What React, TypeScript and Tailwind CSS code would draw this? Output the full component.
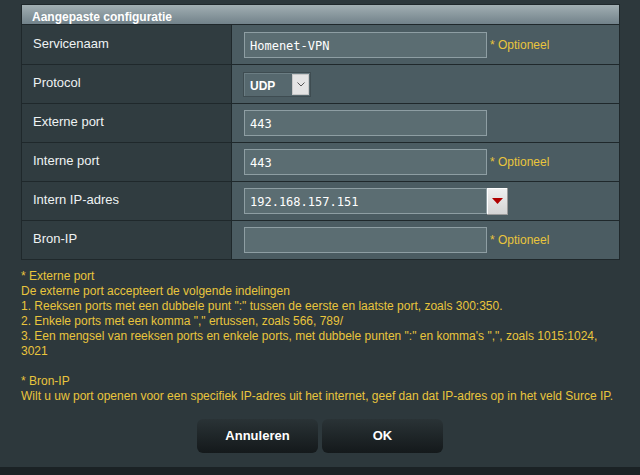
const rows = [
  { label: "Servicenaam", kind: "input", value: "Homenet-VPN", optional: true },
  { label: "Protocol", kind: "select", value: "UDP", optional: false },
  { label: "Externe port", kind: "input", value: "443", optional: false },
  { label: "Interne port", kind: "input", value: "443", optional: true },
  { label: "Intern IP-adres", kind: "ip", value: "192.168.157.151", optional: false },
  { label: "Bron-IP", kind: "input", value: "", optional: true },
];

const notes = [
  "* Externe port",
  "De externe port accepteert de volgende indelingen",
  '1. Reeksen ports met een dubbele punt ":" tussen de eerste en laatste port, zoals 300:350.',
  '2. Enkele ports met een komma "," ertussen, zoals 566, 789/',
  '3. Een mengsel van reeksen ports en enkele ports, met dubbele punten ":" en komma\'s ",", zoals 1015:1024,',
  "3021",
];

const Field = ({ kind, value }: { kind: string; value: string }) => {
  if (kind === "select") {
    return (
      <div className="flex h-[25px] w-[68px] items-stretch border border-[#3e4c51] bg-[#56686e] shadow-[inset_1px_1px_0_#6b7d83]">
        <span className="flex-1 pl-[6px] pt-[4px] font-['Liberation_Sans',sans-serif] text-[12px] font-bold text-white">{value}</span>
        <span className="my-[1px] mr-[1px] flex w-[17px] items-center justify-center border border-[#c8c8c8] bg-[#e4e4e4]">
          <svg width="8" height="5" viewBox="0 0 8 5">
            <path d="M0.5 0.5 L4 4 L7.5 0.5" fill="none" stroke="#555" strokeWidth="1" />
          </svg>
        </span>
      </div>
    );
  }
  return (
    <div className="flex items-stretch">
      <div className="ml-[1px] h-[26px] w-[243px] border border-[#8e9ea3] bg-[#5b6d72] pl-[5px] pt-[4px] font-['DejaVu_Sans_Mono',monospace] text-[12px] text-white">
        {value}
      </div>
      {kind === "ip" && (
        <div className="flex h-[27px] w-[21px] items-center justify-center border-r border-b border-[#9a9a9a] bg-gradient-to-b from-[#f0f0f0] to-[#d4d4d4] shadow-[inset_1px_1px_0_#fff]">
          <svg width="11" height="6" viewBox="0 0 11 6">
            <path d="M0 0 H11 L5.5 6 Z" fill="#b00000" />
          </svg>
        </div>
      )}
    </div>
  );
};

const App = () => {
  return (
    <div className="flex h-[475px] w-[640px] flex-col bg-[#2d383c] font-['Liberation_Sans',sans-serif]">
      <div className="flex-1 px-[21px] pt-[4px]">
        <div className="w-[599px] border border-[#1f282b]">
          <div className="h-[20px] border-b border-[#1f282b] bg-gradient-to-b from-[#a2afb3] to-[#72828a] pl-[10px] pt-[3px] text-[12px] font-bold text-white">
            Aangepaste configuratie
          </div>
          {rows.map((row, i) => (
            <div
              key={i}
              className={`grid h-[39px] grid-cols-[210px_1fr] ${i > 0 ? "border-t border-[#1f282b]" : ""}`}
            >
              <div className="flex items-center border-r border-[#1f282b] bg-[#303c40] pb-[2px] pl-[11px] text-[13px] text-[#eef2f3]">
                {row.label}
              </div>
              <div className="flex items-center gap-[3px] bg-[#4b5c62] pl-[11px]">
                <Field kind={row.kind} value={row.value} />
                {row.optional && <span className="text-[12px] text-[#e9c53c]">* Optioneel</span>}
              </div>
            </div>
          ))}
        </div>

        <div className="mt-[9px] text-[12px] leading-[15px] text-[#e9c53c]">
          {notes.map((n, i) => (
            <div key={i}>{n}</div>
          ))}
          <div className="mt-[15px]">* Bron-IP</div>
          <div>Wilt u uw port openen voor een specifiek IP-adres uit het internet, geef dan dat IP-adres op in het veld Surce IP.</div>
        </div>

        <div className="mt-[15px] flex justify-center gap-[4px]">
          <button className="h-[34px] w-[121px] rounded-[6px] bg-gradient-to-b from-[#2a3336] to-[#14191b] text-[13px] font-bold text-white">
            Annuleren
          </button>
          <button className="h-[34px] w-[121px] rounded-[6px] bg-gradient-to-b from-[#2a3336] to-[#14191b] text-[13px] font-bold text-white">
            OK
          </button>
        </div>
      </div>
      <div className="h-[8px] bg-[#1b2225]" />
    </div>
  );
};

export default App;
